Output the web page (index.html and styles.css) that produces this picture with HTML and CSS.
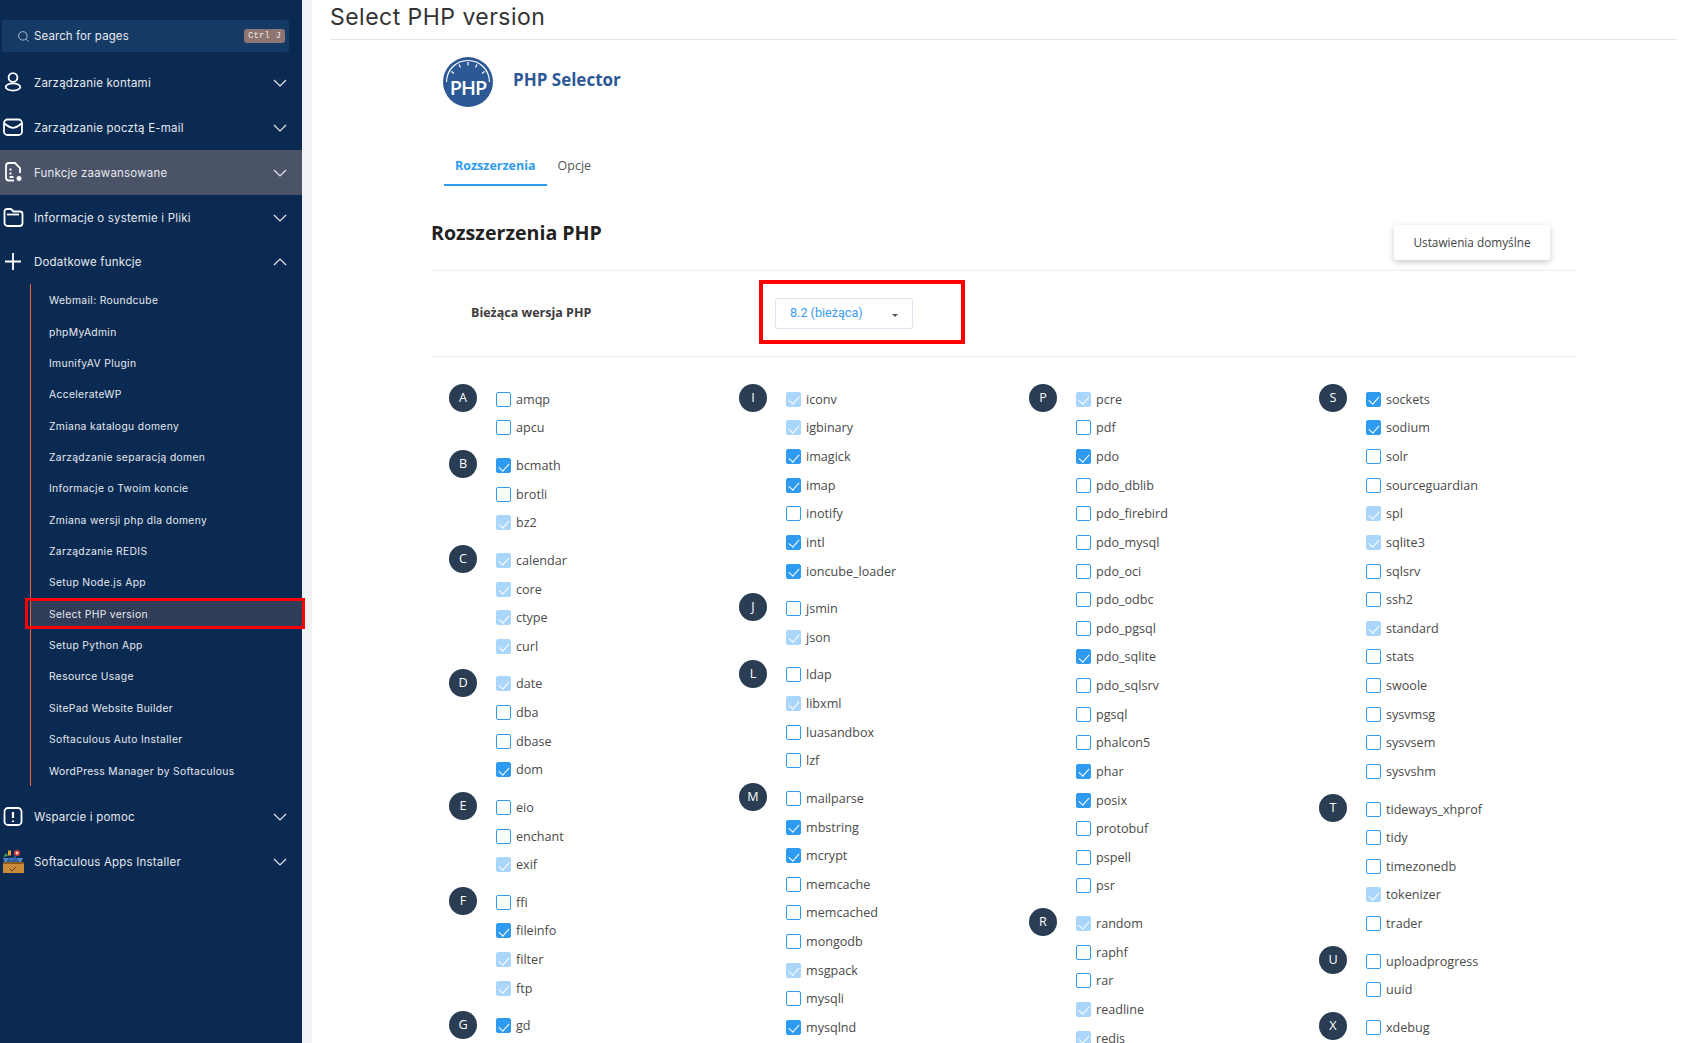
FILE: index.html
```html
<!DOCTYPE html>
<html lang="pl">
<head>
<meta charset="utf-8">
<title>Select PHP version</title>
<link rel="stylesheet" href="styles.css">
</head>
<body>
<aside class="sidebar">
  <div class="search">
    <svg class="search-icon" viewBox="0 0 14 14"><circle cx="6.3" cy="6.3" r="4.6"/><path d="M9.8 9.8l2.7 2.7"/></svg>
    <span class="search-text">Search for pages</span>
    <span class="kbd">Ctrl J</span>
  </div>
  <nav>
    <a class="menu-item">
      <svg class="mi" viewBox="0 0 26 26"><circle cx="13" cy="7.5" r="4.4"/><ellipse cx="13" cy="17" rx="7.3" ry="3.6"/></svg>
      <span class="mt">Zarządzanie kontami</span>
      <svg class="chev" viewBox="0 0 14 8"><path d="M1 1l6 6 6-6"/></svg>
    </a>
    <a class="menu-item">
      <svg class="mi" viewBox="0 0 26 26"><rect x="4" y="4.5" width="18" height="15.5" rx="3.5"/><path d="M4.5 8.5c3 2.5 5.5 4.3 8.5 4.3s5.500-1.800 8.500-4.300"/></svg>
      <span class="mt">Zarządzanie pocztą E-mail</span>
      <svg class="chev" viewBox="0 0 14 8"><path d="M1 1l6 6 6-6"/></svg>
    </a>
    <a class="menu-item hover">
      <svg class="mi" viewBox="0 0 26 26"><path d="M14 20.500H9a3 3 0 0 1-3-3V6a3 3 0 0 1 3-3h6l5 5v5"/><path d="M9.500 9.500h2M9.500 13.500h2M9.500 17h4"/><circle class="gear" cx="19" cy="18.500" r="3"/></svg>
      <span class="mt">Funkcje zaawansowane</span>
      <svg class="chev" viewBox="0 0 14 8"><path d="M1 1l6 6 6-6"/></svg>
    </a>
    <a class="menu-item">
      <svg class="mi" viewBox="0 0 26 26"><path d="M4.500 8V6.500a2.500 2.500 0 0 1 2.500-2.500h4l2.500 2.500h6.500a2.500 2.500 0 0 1 2.500 2.500v9a3 3 0 0 1-3 3H7.500a3 3 0 0 1-3-3z"/><path d="M7 9.500h12"/></svg>
      <span class="mt">Informacje o systemie i Pliki</span>
      <svg class="chev" viewBox="0 0 14 8"><path d="M1 1l6 6 6-6"/></svg>
    </a>
    <a class="menu-item short">
      <svg class="mi" viewBox="0 0 26 26"><path d="M13 4v17M5 12.500h16"/></svg>
      <span class="mt">Dodatkowe funkcje</span>
      <svg class="chev" viewBox="0 0 14 8"><path d="M1 7l6-6 6 6"/></svg>
    </a>
    <ul class="submenu">
      <li>Webmail: Roundcube</li>
      <li>phpMyAdmin</li>
      <li>ImunifyAV Plugin</li>
      <li>AccelerateWP</li>
      <li>Zmiana katalogu domeny</li>
      <li>Zarządzanie separacją domen</li>
      <li>Informacje o Twoim koncie</li>
      <li>Zmiana wersji php dla domeny</li>
      <li>Zarządzanie REDIS</li>
      <li>Setup Node.js App</li>
      <li class="current">Select PHP version</li>
      <li>Setup Python App</li>
      <li>Resource Usage</li>
      <li>SitePad Website Builder</li>
      <li>Softaculous Auto Installer</li>
      <li>WordPress Manager by Softaculous</li>
    </ul>
    <a class="menu-item">
      <svg class="mi" viewBox="0 0 26 26"><rect x="4.500" y="4" width="17" height="17" rx="3.500"/><path class="bold" d="M13 8v6M13 16.500v1.500"/></svg>
      <span class="mt">Wsparcie i pomoc</span>
      <svg class="chev" viewBox="0 0 14 8"><path d="M1 1l6 6 6-6"/></svg>
    </a>
    <a class="menu-item">
      <svg class="mi soft" viewBox="0 0 26 26"><path d="M3 9l2 5h16l2-5z" fill="#4f86c6"/><path d="M6 14l3-6 2.500 4 3-6 3 4 2 4z" fill="#2f5f9e"/><path d="M3 8l3-4 2 3z" fill="#4a9d3e"/><rect x="8" y="1.500" width="3" height="5" fill="#e8a23a"/><circle cx="17" cy="4" r="3" fill="#d8473a"/><circle cx="17" cy="4" r="1.200" fill="#f3e2d0"/><rect x="3" y="14" width="21" height="10" fill="#c98a3a"/><rect x="3" y="13" width="21" height="2" fill="#8a5a20"/><path d="M10 20l2 2 4-4" fill="none" stroke="#5a4020" stroke-width="1"/></svg>
      <span class="mt">Softaculous Apps Installer</span>
      <svg class="chev" viewBox="0 0 14 8"><path d="M1 1l6 6 6-6"/></svg>
    </a>
  </nav>
</aside>

<main class="main">
  <h1 class="page-title">Select PHP version</h1>
  <div class="content">
    <div class="brand">
      <svg class="logo" viewBox="0 0 50 50">
        <circle cx="25" cy="25" r="25" fill="#2d5896"/>
        <path d="M3.500 25a21.500 21.500 0 0 1 43 0" fill="none" stroke="#fff" stroke-width="1.200"/>
        <path d="M8.500 14.500l2.500 2M16 7.500l1.500 3M25 5v3.500M34 7.500l-1.500 3M41.500 14.500l-2.500 2" stroke="#fff" stroke-width="1.200"/>
        <text class="logo-text" x="25" y="38" text-anchor="middle">PHP</text>
      </svg>
      <span class="brand-name">PHP Selector</span>
    </div>
    <div class="tabs">
      <a class="tab active">Rozszerzenia</a>
      <a class="tab">Opcje</a>
    </div>
    <div class="section-head">
      <h2 class="section-title">Rozszerzenia PHP</h2>
      <button class="default-btn">Ustawienia domyślne</button>
    </div>
    <div class="version-row">
      <span class="version-label">Bieżąca wersja PHP</span>
      <div class="annotation">
        <div class="select"><span>8.2 (bieżąca)</span><i class="caret"></i></div>
      </div>
    </div>
    <div class="ext-grid">
      <div class="col">
        <div class="group"><b class="letter">A</b><ul>
          <li><i class="cb"></i>amqp</li><li><i class="cb"></i>apcu</li>
        </ul></div>
        <div class="group"><b class="letter">B</b><ul>
          <li><i class="cb on"></i>bcmath</li><li><i class="cb"></i>brotli</li><li><i class="cb off"></i>bz2</li>
        </ul></div>
        <div class="group"><b class="letter">C</b><ul>
          <li><i class="cb off"></i>calendar</li><li><i class="cb off"></i>core</li><li><i class="cb off"></i>ctype</li><li><i class="cb off"></i>curl</li>
        </ul></div>
        <div class="group"><b class="letter">D</b><ul>
          <li><i class="cb off"></i>date</li><li><i class="cb"></i>dba</li><li><i class="cb"></i>dbase</li><li><i class="cb on"></i>dom</li>
        </ul></div>
        <div class="group"><b class="letter">E</b><ul>
          <li><i class="cb"></i>eio</li><li><i class="cb"></i>enchant</li><li><i class="cb off"></i>exif</li>
        </ul></div>
        <div class="group"><b class="letter">F</b><ul>
          <li><i class="cb"></i>ffi</li><li><i class="cb on"></i>fileinfo</li><li><i class="cb off"></i>filter</li><li><i class="cb off"></i>ftp</li>
        </ul></div>
        <div class="group"><b class="letter">G</b><ul>
          <li><i class="cb on"></i>gd</li>
        </ul></div>
      </div>
      <div class="col">
        <div class="group"><b class="letter">I</b><ul>
          <li><i class="cb off"></i>iconv</li><li><i class="cb off"></i>igbinary</li><li><i class="cb on"></i>imagick</li><li><i class="cb on"></i>imap</li><li><i class="cb"></i>inotify</li><li><i class="cb on"></i>intl</li><li><i class="cb on"></i>ioncube_loader</li>
        </ul></div>
        <div class="group"><b class="letter">J</b><ul>
          <li><i class="cb"></i>jsmin</li><li><i class="cb off"></i>json</li>
        </ul></div>
        <div class="group"><b class="letter">L</b><ul>
          <li><i class="cb"></i>ldap</li><li><i class="cb off"></i>libxml</li><li><i class="cb"></i>luasandbox</li><li><i class="cb"></i>lzf</li>
        </ul></div>
        <div class="group"><b class="letter">M</b><ul>
          <li><i class="cb"></i>mailparse</li><li><i class="cb on"></i>mbstring</li><li><i class="cb on"></i>mcrypt</li><li><i class="cb"></i>memcache</li><li><i class="cb"></i>memcached</li><li><i class="cb"></i>mongodb</li><li><i class="cb off"></i>msgpack</li><li><i class="cb"></i>mysqli</li><li><i class="cb on"></i>mysqlnd</li>
        </ul></div>
      </div>
      <div class="col">
        <div class="group"><b class="letter">P</b><ul>
          <li><i class="cb off"></i>pcre</li><li><i class="cb"></i>pdf</li><li><i class="cb on"></i>pdo</li><li><i class="cb"></i>pdo_dblib</li><li><i class="cb"></i>pdo_firebird</li><li><i class="cb"></i>pdo_mysql</li><li><i class="cb"></i>pdo_oci</li><li><i class="cb"></i>pdo_odbc</li><li><i class="cb"></i>pdo_pgsql</li><li><i class="cb on"></i>pdo_sqlite</li><li><i class="cb"></i>pdo_sqlsrv</li><li><i class="cb"></i>pgsql</li><li><i class="cb"></i>phalcon5</li><li><i class="cb on"></i>phar</li><li><i class="cb on"></i>posix</li><li><i class="cb"></i>protobuf</li><li><i class="cb"></i>pspell</li><li><i class="cb"></i>psr</li>
        </ul></div>
        <div class="group"><b class="letter">R</b><ul>
          <li><i class="cb off"></i>random</li><li><i class="cb"></i>raphf</li><li><i class="cb"></i>rar</li><li><i class="cb off"></i>readline</li><li><i class="cb off"></i>redis</li>
        </ul></div>
      </div>
      <div class="col">
        <div class="group"><b class="letter">S</b><ul>
          <li><i class="cb on"></i>sockets</li><li><i class="cb on"></i>sodium</li><li><i class="cb"></i>solr</li><li><i class="cb"></i>sourceguardian</li><li><i class="cb off"></i>spl</li><li><i class="cb off"></i>sqlite3</li><li><i class="cb"></i>sqlsrv</li><li><i class="cb"></i>ssh2</li><li><i class="cb off"></i>standard</li><li><i class="cb"></i>stats</li><li><i class="cb"></i>swoole</li><li><i class="cb"></i>sysvmsg</li><li><i class="cb"></i>sysvsem</li><li><i class="cb"></i>sysvshm</li>
        </ul></div>
        <div class="group"><b class="letter">T</b><ul>
          <li><i class="cb"></i>tideways_xhprof</li><li><i class="cb"></i>tidy</li><li><i class="cb"></i>timezonedb</li><li><i class="cb off"></i>tokenizer</li><li><i class="cb"></i>trader</li>
        </ul></div>
        <div class="group"><b class="letter">U</b><ul>
          <li><i class="cb"></i>uploadprogress</li><li><i class="cb"></i>uuid</li>
        </ul></div>
        <div class="group"><b class="letter">X</b><ul>
          <li><i class="cb"></i>xdebug</li>
        </ul></div>
      </div>
    </div>
  </div>
</main>
</body>
</html>
```
FILE: styles.css
```css
* { box-sizing: border-box; }
html, body { margin: 0; padding: 0; height: 1043px; overflow: hidden; }
body { display: flex; background: #fff; font-family: "Open Sans", sans-serif; color: #444; }

.sidebar {
  width: 302px; flex: none; height: 1043px; background: #0a2a52;
  padding-top: 20px; font-family: Inter, sans-serif; color: #e6e9ef;
}
.search {
  display: flex; align-items: center; width: 287px; height: 32px; margin-left: 2px;
  padding: 0 4px 0 15px; background: #163a66; border-radius: 3px;
  font-size: 11.500px; letter-spacing: .1px;
}
.search-icon { width: 13px; height: 13px; margin-right: 4px; fill: none; stroke: #b9c3d2; stroke-width: 1; }
.search-text { flex: 1; margin-top: -1px; }
.kbd {
  background: #8f7572; color: #e8e4e2; font: 9px "Liberation Mono", monospace;
  border-radius: 3px; padding: 0 4px; width: 41px; height: 14px; line-height: 14px;
  white-space: nowrap;
}
nav { margin-top: 8px; }
.menu-item { display: flex; align-items: center; height: 45px; font-size: 11.500px; letter-spacing: .2px; }
.menu-item.hover { background: #4b5368; }
.menu-item.short { height: 44px; }
.mi { width: 26px; height: 26px; flex: none; fill: none; stroke: #fff; stroke-width: 1.800; }
.mi .gear { fill: #fff; stroke: #4b5368; stroke-width: 1; }
.mi .bold { stroke-width: 2.200; }
.mi.soft { stroke: none; }
.mt { flex: 1; margin-left: 8px; }
.chev { width: 14px; height: 8px; margin-right: 15px; fill: none; stroke: #e6e9ef; stroke-width: 1.200; }
.submenu {
  list-style: none; margin: 0 0 9px 30px; padding: 0; border-left: 1px solid #f0603c;
  font-size: 10.300px; letter-spacing: .35px;
}
.submenu li { position: relative; display: flex; align-items: center; height: 31.370px; padding: 1px 0 0 18px; }
.submenu li.current { background: #303c58; }
.submenu li.current::after {
  content: ""; position: absolute; left: -6px; right: -3px; top: 0; bottom: -.5px; border: 3px solid #f00;
}

.main { flex: 1; min-width: 0; border-left: 10px solid #f1f2f6; padding: 0 17px 0 18px; }
.page-title {
  margin: 0; height: 40px; border-bottom: 1px solid #e6e6e6; font: 400 23px/35px Inter, sans-serif;
  letter-spacing: .47px; color: #333;
}
.content { width: 1146px; margin-left: 101px; }
.brand { display: flex; align-items: center; margin: 17px 0 0 12px; }
.logo { width: 50px; height: 50px; }
.logo-text { font: 600 20px "Open Sans", sans-serif; fill: #fff; letter-spacing: -1px; }
.brand-name { margin: -6px 0 0 20px; font-size: 17px; font-weight: 700; color: #2d5896; }
.tabs { display: flex; margin: 43px 0 0 13px; height: 36px; }
.tab { padding: 0 11px; font-size: 12.500px; line-height: 32px; color: #555; }
.tab.active { color: #2f9bf0; font-weight: 700; border-bottom: 2px solid #2f9bf0; }
.section-head {
  display: flex; justify-content: space-between; height: 85px;
  border-bottom: 1px solid #ececec; padding: 39px 27px 0 0;
}
.section-title { margin: -6px 0 0; font-size: 19.600px; line-height: 27px; font-weight: 700; color: #222; }
.default-btn {
  width: 156px; height: 35px; padding: 0 0 1px; border: 0; border-radius: 3px; background: #fff;
  box-shadow: 0 2px 6px rgba(0,0,0,.22); font: 400 11.800px "Open Sans", sans-serif; color: #444;
}
.version-row {
  display: flex; align-items: flex-start; height: 86px; padding: 9px 0 0 40px; border-bottom: 1px solid #ececec;
}
.version-label { width: 288px; margin-top: 24px; font-size: 12.500px; font-weight: 700; color: #3c3c3c; line-height: 18px; }
.annotation { width: 206px; height: 64px; border: 4px solid #f00; padding: 14px 0 0 12px; }
.select {
  display: flex; align-items: center; justify-content: space-between; width: 138px; height: 31px;
  padding: 0 14px 2px 14px; border: 1px solid #e0e2f0; border-radius: 3px;
  font: 400 12.600px Roboto, sans-serif; color: #3a9cf0;
}
.caret { width: 0; height: 0; margin-top: 5px; border: 3px solid transparent; border-top: 3px solid #555; border-bottom: 0; }

.ext-grid { display: grid; grid-template-columns: repeat(4, 290px); margin: 27px 0 0 18px; }
.group { display: flex; margin-bottom: 9px; }
.letter {
  width: 28px; height: 28px; flex: none; margin-right: 19px; border-radius: 50%;
  background: #2a3d52; color: #fff; font-size: 12.600px; font-weight: 400; line-height: 27px; text-align: center;
}
.group ul { list-style: none; margin: 1px 0 -1px; padding: 0; }
.group li { display: flex; align-items: center; height: 28.640px; font-size: 12.600px; color: #4a4a4a; }
.cb {
  position: relative; width: 15px; height: 15px; flex: none; margin-right: 5px;
  border: 1px solid #2f9bf0; border-radius: 2px; background: #fff;
}
.cb.on { background: #2f9bf0; }
.cb.off { background: #a9d6fa; border-color: #a9d6fa; }
.cb.on::after, .cb.off::after {
  content: ""; position: absolute; left: 4px; top: 1.500px; width: 5px; height: 9px;
  border: solid #fff; border-width: 0 1.300px 1.300px 0; transform: rotate(42deg);
}
```
